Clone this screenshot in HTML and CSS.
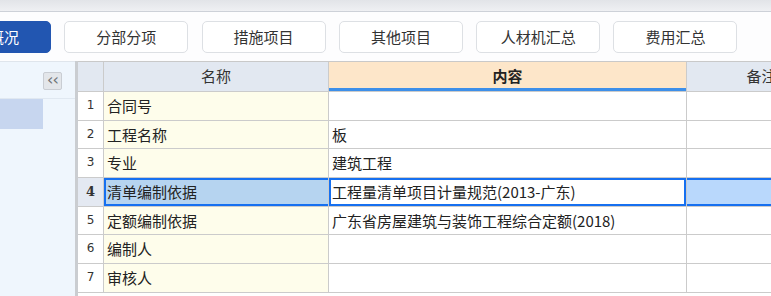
FILE: index.html
```html
<!DOCTYPE html>
<html lang="zh">
<head>
<meta charset="utf-8">
<title>工程概况</title>
<link rel="stylesheet" href="styles.css">
</head>
<body>
<div class="topbar"></div>
<div class="toolbar">
  <button class="tab active">工程概况</button>
  <button class="tab">分部分项</button>
  <button class="tab">措施项目</button>
  <button class="tab">其他项目</button>
  <button class="tab">人材机汇总</button>
  <button class="tab">费用汇总</button>
</div>
<div class="main">
  <aside class="side">
    <div class="side-head"><span class="collapse">‹‹</span></div>
    <div class="side-item"></div>
  </aside>
  <div class="splitter"></div>
  <div class="grid">
    <div class="hd num"></div>
    <div class="hd">名称</div>
    <div class="hd active-col">内容</div>
    <div class="hd">备注</div>

    <div class="num">1</div><div class="name">合同号</div><div class="val"></div><div class="note"></div>
    <div class="num">2</div><div class="name">工程名称</div><div class="val">板</div><div class="note"></div>
    <div class="num">3</div><div class="name">专业</div><div class="val">建筑工程</div><div class="note"></div>
    <div class="num sel">4</div><div class="name sel">清单编制依据</div><div class="val sel">工程量清单项目计量规范(2013-广东)</div><div class="note sel"></div>
    <div class="num">5</div><div class="name">定额编制依据</div><div class="val">广东省房屋建筑与装饰工程综合定额(2018)</div><div class="note"></div>
    <div class="num">6</div><div class="name">编制人</div><div class="val"></div><div class="note"></div>
    <div class="num">7</div><div class="name">审核人</div><div class="val"></div><div class="note"></div>
  </div>
</div>
</body>
</html>
```
FILE: styles.css
```css
* { box-sizing: border-box; }
html, body {
  margin: 0;
  width: 771px;
  height: 296px;
  overflow: hidden;
  background: #ffffff;
  font-family: "Noto Sans CJK SC", "Noto Sans", sans-serif;
  color: #222;
}
.topbar {
  height: 12px;
  background: linear-gradient(#e2e4e8, #eff0f3);
  border-bottom: 1px solid #cdd1d8;
}
.toolbar {
  height: 49px;
  display: flex;
  gap: 13.3px;
  padding-top: 9px;
  margin-left: -73px;
  background: #fdfdfe;
}
.tab {
  flex: none;
  width: 124px;
  height: 32px;
  border: 1px solid #dde0e4;
  border-radius: 5px;
  background: #ffffff;
  font-family: inherit;
  font-size: 15px;
  color: #333;
  padding: 0;
  line-height: 30px;
}
.tab.active {
  background: #2256b1;
  border-color: #2256b1;
  color: #ffffff;
}
.main {
  display: flex;
  height: 235px;
}
.side {
  width: 75px;
  flex: none;
  background: #eff6fd;
  border-top: 1px solid #dfe5ec;
}
.side-head {
  height: 37px;
  display: flex;
  justify-content: flex-end;
  align-items: flex-start;
  padding: 10px 13px 0 0;
  border-bottom: 1px solid #e0e8f1;
}
.collapse {
  width: 19px;
  height: 18px;
  background: #e3e6ea;
  border: 1px solid #c9cdd3;
  border-radius: 2px;
  font-size: 16px;
  line-height: 14px;
  letter-spacing: -1px;
  color: #707478;
  text-align: center;
  font-family: "DejaVu Sans", sans-serif;
}
.side-item {
  width: 43px;
  height: 30px;
  background: #c7d6ef;
}
.splitter {
  width: 3px;
  flex: none;
  background: #cacdd1;
}
.grid {
  flex: 1;
  display: grid;
  grid-template-columns: 26px 225px 358px 150px;
  grid-template-rows: 30px repeat(7, 28.7px);
  align-content: start;
  border-top: 1px solid #c9c9c9;
  font-size: 15px;
  overflow: hidden;
}
.grid > div {
  border-right: 1px solid #cbcbcb;
  border-bottom: 1px solid #cbcbcb;
  white-space: nowrap;
  overflow: hidden;
  line-height: 27px;
  padding-left: 3px;
}
.grid > .hd {
  background: #e2e8f1;
  text-align: center;
  padding-left: 0;
  color: #333;
  line-height: 28px;
}
.grid > .hd.active-col {
  background: #fde6c9;
  font-weight: bold;
  box-shadow: inset 0 -3px 0 #3d8fe9;
  color: #222;
}
.grid > .num {
  padding-left: 0;
  text-align: center;
  font-family: "DejaVu Sans", sans-serif;
  font-size: 12px;
  color: #333;
  background: #ffffff;
}
.grid > .num.hd { background: #e2e8f1; }
.grid > .name { background: #fefdeb; }
.grid > .val { background: #ffffff; }
.grid > .note { background: #ffffff; }
.grid > .num.sel {
  background: #e4e9f2;
  font-weight: bold;
  font-family: "DejaVu Serif", serif;
  font-size: 13px;
}
.grid > .name.sel {
  background: #b6d4f0;
  box-shadow: inset 2px 2px 0 #1670f0, inset 0 -2px 0 #1670f0;
}
.grid > .val.sel {
  box-shadow: inset 0 0 0 2px #1670f0;
}
.grid > .note.sel {
  background: #b9d8fc;
  box-shadow: inset 0 2px 0 #1670f0, inset 0 -2px 0 #1670f0;
}
```
